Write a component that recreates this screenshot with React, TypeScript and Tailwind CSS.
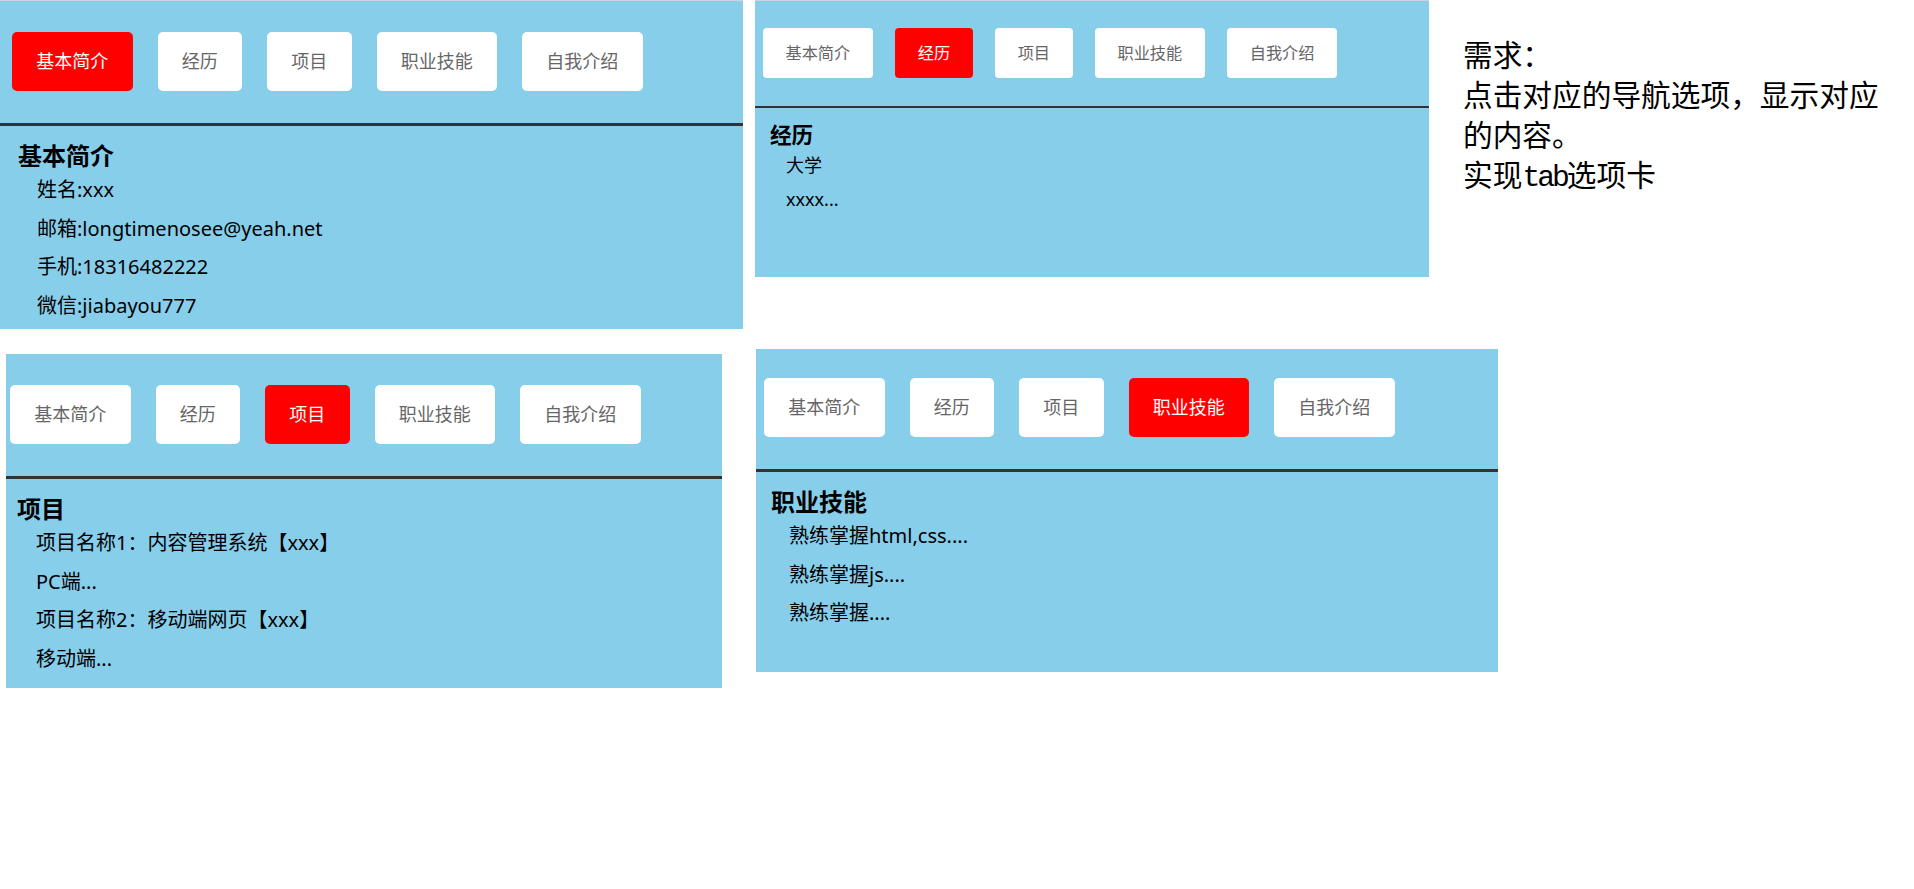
import React, { useState } from 'react';

interface TabItem {
    title: string;
    lines: string[];
}

const tabs: TabItem[] = [
    { title: '基本简介', lines: ['姓名:xxx', '邮箱:longtimenosee@yeah.net', '手机:18316482222', '微信:jiabayou777'] },
    { title: '经历', lines: ['大学', 'xxxx...'] },
    { title: '项目', lines: ['项目名称1：内容管理系统【xxx】', 'PC端...', '项目名称2：移动端网页【xxx】', '移动端...'] },
    { title: '职业技能', lines: ['熟练掌握html,css....', '熟练掌握js....', '熟练掌握....'] },
    { title: '自我介绍', lines: ['xxx...'] },
];

// two capture scales: the second screenshot was taken zoomed out a bit
const sizes = {
    lg: {
        btn: 'h-[59px] px-[24.25px] text-[18px] rounded-[5px]',
        gap: 'gap-[25px]',
        divider: 'border-b-[3px]',
        heading: 'text-[24px] leading-[30px]',
        line: 'text-[20px] leading-[38.5px]',
    },
    sm: {
        btn: 'h-[50px] px-[22.5px] text-[16.2px] rounded-[4px]',
        gap: 'gap-[22.5px]',
        divider: 'border-b-[2px]',
        heading: 'text-[21.6px] leading-[26px]',
        line: 'text-[18px] leading-[34.5px]',
    },
};

interface TabCardProps {
    initial: number;
    size: 'lg' | 'sm';
    className: string;
    navClass: string;
    contentClass: string;
    lineClass: string;
}

const TabCard: React.FC<TabCardProps> = ({ initial, size, className, navClass, contentClass, lineClass }) => {
    const [active, setActive] = useState(initial);
    const s = sizes[size];
    const tab = tabs[active];

    return (
        <div className={`shrink-0 bg-[#87ceeb] overflow-hidden ${className}`}>
            <div className={`flex border-[#333333] ${s.gap} ${s.divider} ${navClass}`}>
                {tabs.map((t, i) => (
                    <button
                        key={t.title}
                        onClick={() => setActive(i)}
                        className={`flex items-center justify-center whitespace-nowrap ${s.btn} ${
                            i === active ? 'bg-[#ff0000] text-white' : 'bg-white text-[#666666]'
                        }`}
                    >
                        {t.title}
                    </button>
                ))}
            </div>
            <div className={contentClass}>
                <h3 className={`font-bold text-black ${s.heading}`}>{tab.title}</h3>
                {tab.lines.map((l) => (
                    <p key={l} className={`text-black whitespace-nowrap ${s.line} ${lineClass}`}>
                        {l}
                    </p>
                ))}
            </div>
        </div>
    );
};

export default function App() {
    return (
        <div className="min-h-screen bg-white font-['Noto_Sans','Noto_Sans_CJK_SC',sans-serif]">
            <div className="flex items-start">
                <TabCard
                    initial={0}
                    size="lg"
                    className="w-[743px] h-[329px] border-t border-[#cdd5da]"
                    navClass="pt-[31px] pb-[32px] pl-[12px]"
                    contentClass="pl-[18px] pt-[15px]"
                    lineClass="pl-[19px]"
                />
                <TabCard
                    initial={1}
                    size="sm"
                    className="ml-[12px] w-[674px] h-[277px] border-t border-[#cdd5da]"
                    navClass="pt-[27px] pb-[28px] pl-[8px]"
                    contentClass="pl-[15px] pt-[13.5px]"
                    lineClass="pl-[16px]"
                />
                <div className="ml-[34px] mt-[34px] w-[422px] text-[29.7px] leading-[40px] text-black font-['Noto_Sans_CJK_SC',sans-serif]">
                    <p>需求：</p>
                    <p>点击对应的导航选项，显示对应的内容。</p>
                    <p>
                        实现<span className="font-['Liberation_Mono','Noto_Sans_CJK_SC',monospace] tracking-[-3px]">tab</span>选项卡
                    </p>
                </div>
            </div>
            <div className="flex items-start mt-[20px]">
                <TabCard
                    initial={2}
                    size="lg"
                    className="ml-[6px] mt-[5px] w-[716px] h-[334px]"
                    navClass="pt-[31px] pb-[32px] pl-[4px]"
                    contentClass="pl-[11px] pt-[15px]"
                    lineClass="pl-[19px]"
                />
                <TabCard
                    initial={3}
                    size="lg"
                    className="ml-[34px] w-[742px] h-[323px]"
                    navClass="pt-[29px] pb-[32px] pl-[8px]"
                    contentClass="pl-[15px] pt-[15px]"
                    lineClass="pl-[18px]"
                />
            </div>
        </div>
    );
}
